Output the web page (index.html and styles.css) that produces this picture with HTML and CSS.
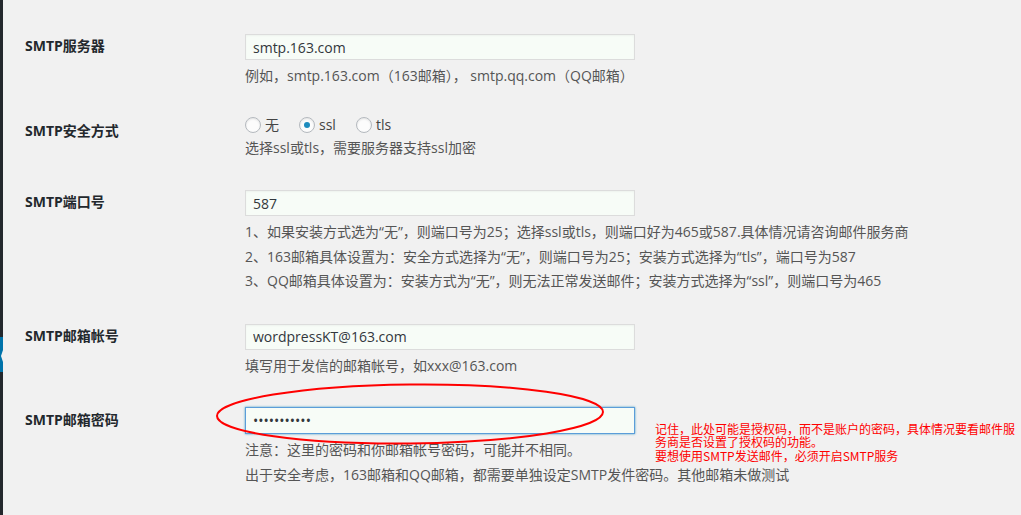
FILE: index.html
```html
<!DOCTYPE html>
<html lang="zh-CN">
<head>
<meta charset="utf-8">
<title>SMTP 设置</title>
<link rel="stylesheet" href="styles.css">
</head>
<body>
<div class="page">
  <div class="admin-strip"><div class="current-item"></div></div>
  <div class="main">
    <div class="form-table">
      <div class="th">SMTP服务器</div>
      <div class="td">
        <input class="regular-text" type="text" value="smtp.163.com">
        <p class="description">例如，smtp.163.com（163邮箱）， smtp.qq.com（QQ邮箱）</p>
      </div>

      <div class="th">SMTP安全方式</div>
      <div class="td">
        <div class="radios">
          <label class="radio"><span class="radio-box"></span>无</label>
          <label class="radio"><span class="radio-box checked"></span>ssl</label>
          <label class="radio"><span class="radio-box"></span>tls</label>
        </div>
        <p class="description">选择ssl或tls，需要服务器支持ssl加密</p>
      </div>

      <div class="th">SMTP端口号</div>
      <div class="td">
        <input class="regular-text" type="text" value="587">
        <p class="description">1、如果安装方式选为“无”，则端口号为25；选择ssl或tls，则端口好为465或587.具体情况请咨询邮件服务商</p>
        <p class="description">2、163邮箱具体设置为：安全方式选择为“无”，则端口号为25；安装方式选择为“tls”，端口号为587</p>
        <p class="description">3、QQ邮箱具体设置为：安装方式为“无”，则无法正常发送邮件；安装方式选择为“ssl”，则端口号为465</p>
      </div>

      <div class="th">SMTP邮箱帐号</div>
      <div class="td">
        <input class="regular-text" type="text" value="wordpressKT@163.com">
        <p class="description">填写用于发信的邮箱帐号，如xxx@163.com</p>
      </div>

      <div class="th">SMTP邮箱密码</div>
      <div class="td">
        <input class="regular-text focused" type="password" value="abcdefghijk">
        <p class="description">注意：这里的密码和你邮箱帐号密码，可能并不相同。</p>
        <p class="description">出于安全考虑，163邮箱和QQ邮箱，都需要单独设定SMTP发件密码。其他邮箱未做测试</p>
      </div>
    </div>
  </div>
</div>

<svg class="mark-ellipse" width="400" height="70" viewBox="0 0 400 70" aria-hidden="true">
  <ellipse cx="196" cy="33" rx="193" ry="29.5" transform="rotate(-0.6 196 33)" fill="none" stroke="#ff0000" stroke-width="2"/>
</svg>

<div class="annotation">
  记住，此处可能是授权码，而不是账户的密码，具体情况要看邮件服务商是否设置了授权码的功能。<br>要想使用SMTP发送邮件，必须开启SMTP服务
</div>
</body>
</html>
```

FILE: styles.css
```css
html, body {
  margin: 0;
  padding: 0;
}

body {
  background: #f1f1f1;
  font-family: "Open Sans", "Noto Sans CJK SC", sans-serif;
  font-size: 14px;
  color: #444;
  position: relative;
  width: 1021px;
  height: 515px;
  overflow: hidden;
}

.page {
  display: flex;
  min-height: 515px;
}

.admin-strip {
  width: 3px;
  background: #23282d;
  flex-shrink: 0;
  position: relative;
}

.current-item {
  margin-top: 337px;
  height: 35px;
  background: #0073aa;
  position: relative;
}

.current-item::after {
  content: "";
  position: absolute;
  right: 0;
  top: 13px;
  border-style: solid;
  border-width: 6px 2px 6px 0;
  border-color: transparent #f1f1f1 transparent transparent;
}

.main {
  flex: 1;
  padding: 19px 0 0 22px;
}

.form-table {
  display: grid;
  grid-template-columns: 220px 1fr;
}

.th {
  padding-top: 18px;
  line-height: 18px;
  font-weight: 700;
  color: #23282d;
  font-size: 14px;
}

.td {
  padding: 15px 0;
}

.regular-text {
  display: block;
  box-sizing: border-box;
  width: 390px;
  height: 26px;
  margin: 0;
  padding: 0 7px;
  border: 1px solid #dcdcdc;
  background: #f7fcf7;
  color: #32373c;
  font-family: "Open Sans", "Noto Sans CJK SC", sans-serif;
  font-size: 14px;
  outline: none;
  box-shadow: inset 0 1px 2px rgba(0, 0, 0, 0.04);
}

.regular-text.focused {
  height: 27px;
  margin-top: -1px;
  border-color: #5b9dd9;
  box-shadow: 0 0 2px rgba(30, 140, 190, 0.8);
}

.description {
  width: fit-content;
  margin: 4px 0 0;
  line-height: 24.5px;
  color: #555;
  font-size: 14px;
}

.description + .description {
  margin-top: 0;
}

.radios {
  display: flex;
  align-items: center;
  height: 14px;
  margin: -1px 0 1px;
}

.radio {
  display: flex;
  align-items: center;
  margin-right: 20px;
  color: #444;
  line-height: 14px;
}

.radio-box {
  box-sizing: border-box;
  width: 16px;
  height: 16px;
  margin-right: 4px;
  border: 1px solid #b4b9be;
  border-radius: 50%;
  background: #fcfcfc;
  box-shadow: inset 0 1px 2px rgba(0, 0, 0, 0.1);
  display: flex;
  align-items: center;
  justify-content: center;
}

.radio-box.checked::before {
  content: "";
  width: 6px;
  height: 6px;
  border-radius: 50%;
  background: #1e8cbe;
}

.mark-ellipse {
  position: absolute;
  left: 214px;
  top: 381px;
}

.annotation {
  position: absolute;
  left: 655px;
  top: 422px;
  width: 362px;
  font-family: "Noto Sans CJK SC", sans-serif;
  font-size: 12px;
  line-height: 13.3px;
  color: #ff0000;
}
```
